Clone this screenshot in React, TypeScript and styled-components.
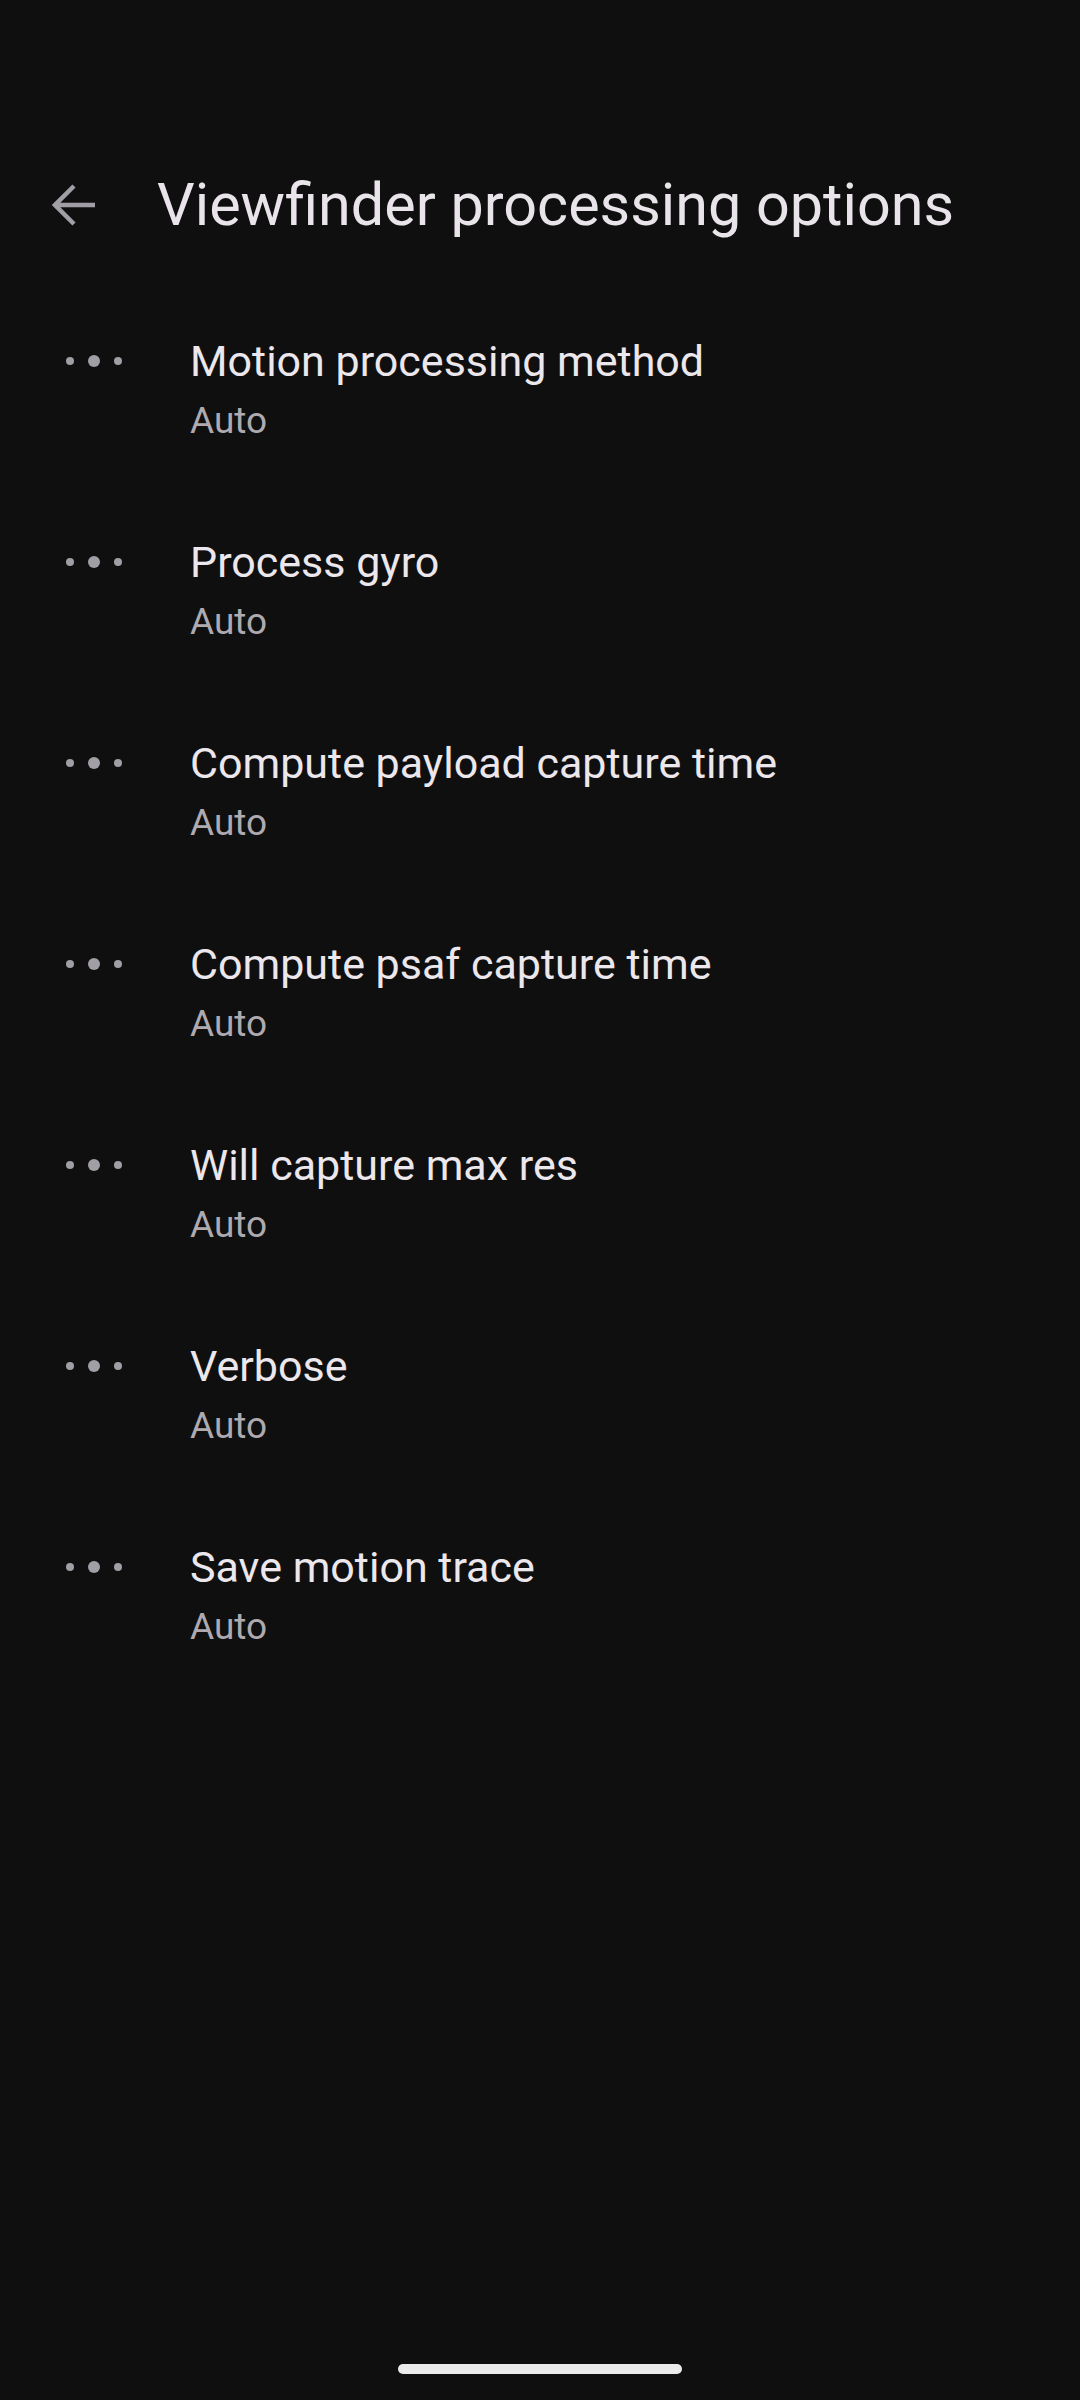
import { FC } from 'react';
import styled, { createGlobalStyle } from 'styled-components';

const BG = '#0f0f0f';

const GlobalStyle = createGlobalStyle`
  html, body {
    margin: 0;
    padding: 0;
    background: ${BG};
  }
  body {
    font-family: Roboto, "Noto Sans", sans-serif;
    -webkit-font-smoothing: antialiased;
  }
`;

const Screen = styled.div`
  width: 1080px;
  height: 2400px;
  background: ${BG};
  display: flex;
  flex-direction: column;
  overflow: hidden;
`;

const Header = styled.header`
  display: flex;
  align-items: center;
  padding: 171px 0 0 52px;
  height: 68px;
  margin-bottom: 50px;
`;

const BackButton = styled.button`
  display: grid;
  place-items: center;
  width: 44px;
  height: 44px;
  padding: 0;
  border: none;
  background: transparent;
  margin-right: 61px;
`;

const Title = styled.h1`
  margin: 0;
  font-family: Roboto, sans-serif;
  font-weight: 400;
  font-size: 59.3px;
  line-height: 68px;
  color: #e8e4e9;
  white-space: nowrap;
`;

const List = styled.ul`
  list-style: none;
  margin: 0;
  padding: 0;
  display: flex;
  flex-direction: column;
`;

const Row = styled.li`
  display: flex;
  align-items: flex-start;
  padding: 44px 0 45px 66px;
  gap: 68px;
`;

const Leading = styled.div`
  width: 56px;
  height: 56px;
  display: flex;
  align-items: center;
  justify-content: space-between;
`;

const Dot = styled.span<{ $big?: boolean }>`
  width: ${({ $big }) => ($big ? 12 : 8)}px;
  height: ${({ $big }) => ($big ? 12 : 8)}px;
  border-radius: 50%;
  background: #a19ea5;
`;

const Texts = styled.div`
  display: flex;
  flex-direction: column;
`;

const ItemTitle = styled.div`
  font-size: 43px;
  line-height: 56px;
  color: #ebe7ec;
`;

const ItemValue = styled.div`
  margin-top: 8px;
  font-size: 37px;
  line-height: 48px;
  color: #aeaab0;
`;

const Spacer = styled.div`
  flex: 1;
`;

const HomeBar = styled.div`
  align-self: center;
  width: 284px;
  height: 10px;
  border-radius: 5px;
  background: #ebebeb;
  margin-bottom: 26px;
`;

const ArrowBack: FC = () => (
  <svg width="44" height="44" viewBox="0 0 44 44" fill="none">
    <path
      d="M43 22H3M22 3L3 22L22 41"
      stroke="#a29ea6"
      strokeWidth="4.5"
      strokeLinecap="butt"
      strokeLinejoin="miter"
    />
  </svg>
);

const ITEMS = [
  'Motion processing method',
  'Process gyro',
  'Compute payload capture time',
  'Compute psaf capture time',
  'Will capture max res',
  'Verbose',
  'Save motion trace',
];

const App: FC = () => (
  <>
    <GlobalStyle />
    <Screen>
      <Header>
        <BackButton aria-label="Back">
          <ArrowBack />
        </BackButton>
        <Title>Viewfinder processing options</Title>
      </Header>
      <List>
        {ITEMS.map((label) => (
          <Row key={label}>
            <Leading>
              <Dot />
              <Dot $big />
              <Dot />
            </Leading>
            <Texts>
              <ItemTitle>{label}</ItemTitle>
              <ItemValue>Auto</ItemValue>
            </Texts>
          </Row>
        ))}
      </List>
      <Spacer />
      <HomeBar />
    </Screen>
  </>
);

export default App;
